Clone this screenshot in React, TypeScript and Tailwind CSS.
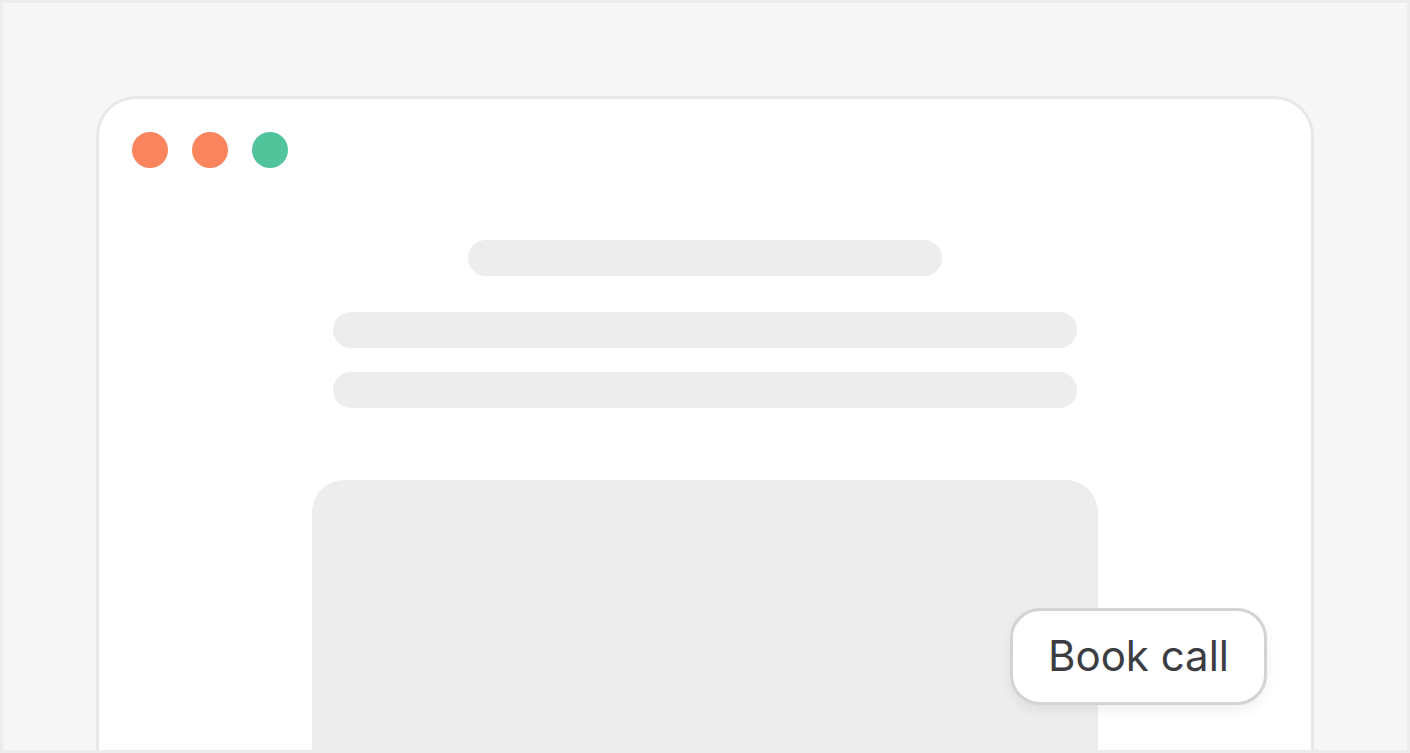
export default function App() {
  return (
    <div className="h-[753px] w-[1410px] border-[3px] border-[#ececec] bg-[#f6f6f6] px-[93px] pt-[93px] flex flex-col overflow-hidden">
      <div className="relative flex-1 flex flex-col bg-white border-[3px] border-b-0 border-[#e8e8e8] rounded-t-[40px] overflow-hidden">
        <div className="flex gap-6 pl-[33px] pt-[33px]">
          <div className="w-9 h-9 rounded-full bg-[#f9845d]" />
          <div className="w-9 h-9 rounded-full bg-[#f9845d]" />
          <div className="w-9 h-9 rounded-full bg-[#51c49c]" />
        </div>
        <div className="flex flex-col items-center mt-[72px]">
          <div className="w-[474px] h-9 rounded-full bg-[#ededed]" />
          <div className="w-[744px] h-9 rounded-full bg-[#ededed] mt-9" />
          <div className="w-[744px] h-9 rounded-full bg-[#ededed] mt-6" />
          <div className="w-[786px] h-[400px] rounded-t-[32px] bg-[#ededed] mt-[72px]" />
        </div>
        <div
          className="absolute right-[44px] top-[509px] w-[257px] h-[97px] rounded-[30px] border-[3px] border-[#d3d3d3] bg-white flex items-center justify-center pb-[2px] shadow-[0_6px_12px_rgba(0,0,0,0.06)] text-[42px] text-[#3b3d42]"
          style={{ fontFamily: "Inter, 'Liberation Sans', sans-serif" }}
        >
          Book call
        </div>
      </div>
    </div>
  );
}
